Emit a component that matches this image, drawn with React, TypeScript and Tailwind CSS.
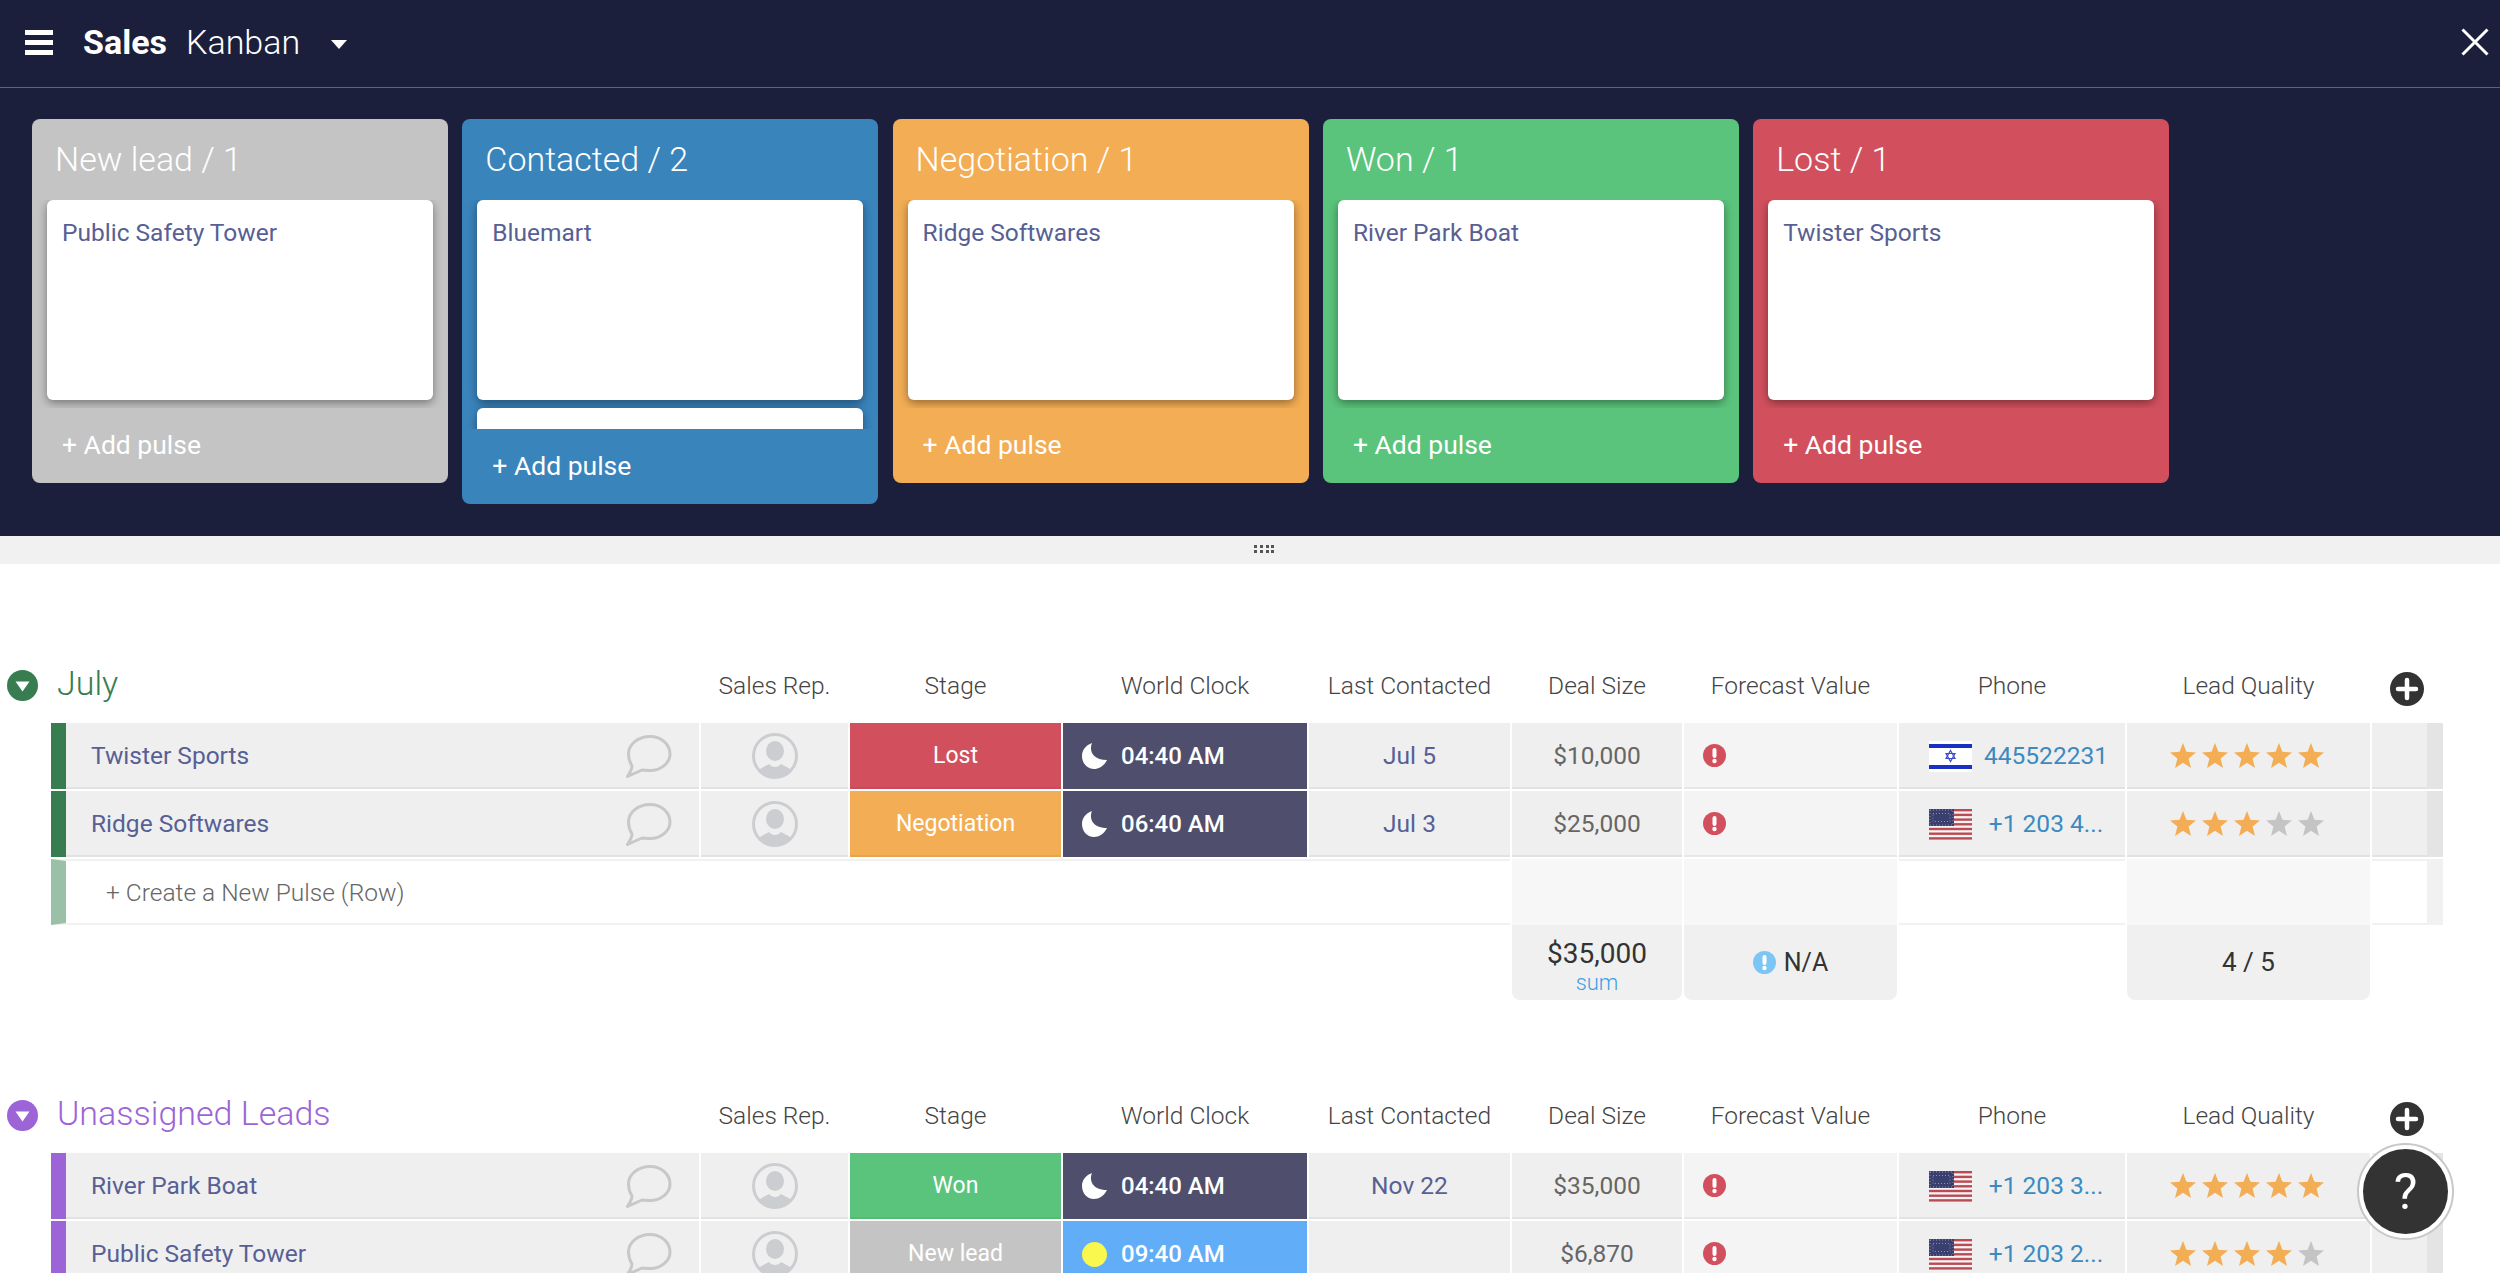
const gridCols = "grid grid-cols-[648px_147px_211px_244px_201px_170px_213px_226px_243px_71px] gap-x-[2px] ml-[51px]"
const cellBase = "shadow-[inset_0_-2px_0_rgba(0,0,0,0.05)] flex items-center"
const rowCell = `bg-[#efefef] justify-center ${cellBase}`

const lanes = [
  { title: "New lead / 1", bg: "bg-[#c4c4c4]", cards: ["Public Safety Tower"] },
  { title: "Contacted / 2", bg: "bg-[#3a84bc]", cards: ["Bluemart", ""] },
  { title: "Negotiation / 1", bg: "bg-[#f3ad54]", cards: ["Ridge Softwares"] },
  { title: "Won / 1", bg: "bg-[#5bc47c]", cards: ["River Park Boat"] },
  { title: "Lost / 1", bg: "bg-[#d2505e]", cards: ["Twister Sports"] },
]

const columnNames = ["Sales Rep.", "Stage", "World Clock", "Last Contacted", "Deal Size", "Forecast Value", "Phone", "Lead Quality"]

type Row = {
  name: string
  stage: string
  stageBg: string
  time: string
  day?: boolean
  contacted: string
  deal: string
  flag: "il" | "us"
  phone: string
  stars: number
}

const julyRows: Row[] = [
  { name: "Twister Sports", stage: "Lost", stageBg: "bg-[#d2505e]", time: "04:40 AM", contacted: "Jul 5", deal: "$10,000", flag: "il", phone: "445522231", stars: 5 },
  { name: "Ridge Softwares", stage: "Negotiation", stageBg: "bg-[#f3ad54]", time: "06:40 AM", contacted: "Jul 3", deal: "$25,000", flag: "us", phone: "+1 203 4...", stars: 3 },
]

const unassignedRows: Row[] = [
  { name: "River Park Boat", stage: "Won", stageBg: "bg-[#5bc47c]", time: "04:40 AM", contacted: "Nov 22", deal: "$35,000", flag: "us", phone: "+1 203 3...", stars: 5 },
  { name: "Public Safety Tower", stage: "New lead", stageBg: "bg-[#c4c4c4]", time: "09:40 AM", day: true, contacted: "", deal: "$6,870", flag: "us", phone: "+1 203 2...", stars: 4 },
]

function CommentIcon() {
  return (
    <svg width="46" height="43" viewBox="0 0 46 43" fill="none" className="text-[#c8c8c8]">
      <path
        d="M6 31C3.500 27 2.500 23 2.500 19C2.500 9.500 12 1.500 24 1.500C36 1.500 44 10 44 19C44 28 35 35.500 24 35.500C21 35.500 18 35 16 35L1.500 41.500C3.500 38 6 35 6 31Z"
        stroke="currentColor"
        strokeWidth="3"
        strokeLinejoin="round"
      />
    </svg>
  )
}

function AvatarIcon() {
  return (
    <svg width="46" height="46" viewBox="0 0 46 46">
      <circle cx="23" cy="23" r="21.500" fill="#efefef" stroke="#cbcdd0" strokeWidth="3" />
      <ellipse cx="23" cy="18" rx="9" ry="10" fill="#cbcdd0" />
      <path d="M7 37C10 34 14 33 17 31C20 35 26 35 29 31C32 33 36 34 39 37C35 41.500 29 44 23 44C17 44 11 41.500 7 37Z" fill="#cbcdd0" />
    </svg>
  )
}

function MoonIcon() {
  return (
    <svg width="25" height="26" viewBox="0 0 25 26">
      <path d="M10 0C7 7 10 17 25 17C22 23 17 26 12 26C5 26 0 20 0 13C0 7 4 2 10 0Z" fill="white" />
    </svg>
  )
}

function AlertDot({ color }: { color: string }) {
  return (
    <svg width="23" height="23" viewBox="0 0 23 23">
      <circle cx="11.500" cy="11.500" r="11.500" fill={color} />
      <rect x="9.500" y="4" width="4" height="10" rx="2" fill="white" />
      <circle cx="11.500" cy="17" r="2.200" fill="white" />
    </svg>
  )
}

function IsraelFlag() {
  return (
    <svg width="43" height="31" viewBox="0 0 43 31" className="shrink-0">
      <rect width="43" height="31" fill="white" />
      <rect y="3" width="43" height="4" fill="#1a2fc4" />
      <rect y="24" width="43" height="4" fill="#1a2fc4" />
      <path d="M21.500 9.500L26 17.500H17ZM21.500 20.500L17 12.500H26Z" fill="none" stroke="#3c4bd0" strokeWidth="1.200" />
    </svg>
  )
}

function UsFlag() {
  const stripes = [0, 1, 2, 3, 4, 5, 6]
  return (
    <svg width="43" height="31" viewBox="0 0 43 31" className="shrink-0">
      <rect width="43" height="31" fill="#f4f4f4" />
      {stripes.map((i) => (
        <rect key={i} y={i * 4.700} width="43" height="2.400" fill="#bb4a54" />
      ))}
      <rect width="25" height="17" fill="#39406f" />
      <rect x="1" y="1" width="23" height="15" fill="none" stroke="#8d91ae" strokeWidth="1" strokeDasharray="1 2" />
      <rect x="4" y="4.500" width="17" height="8" fill="none" stroke="#8d91ae" strokeWidth="1" strokeDasharray="1 2" />
    </svg>
  )
}

function Star({ on }: { on: boolean }) {
  return (
    <svg width="26" height="25" viewBox="0 0 26 25">
      <path d="M13 0L16.400 8.800L26 9.500L18.600 15.500L21 25L13 19.800L5 25L7.400 15.500L0 9.500L9.600 8.800Z" fill={on ? "#f3ad54" : "#c4c4c4"} />
    </svg>
  )
}

function PlusCircle() {
  return (
    <svg width="34" height="34" viewBox="0 0 34 34">
      <circle cx="17" cy="17" r="17" fill="#333333" />
      <path d="M17 8V26M8 17H26" stroke="white" strokeWidth="4.500" strokeLinecap="round" />
    </svg>
  )
}

function GroupToggle({ color }: { color: string }) {
  return (
    <svg width="31" height="31" viewBox="0 0 31 31" className="shrink-0">
      <circle cx="15.500" cy="15.500" r="15.500" fill={color} />
      <path d="M8.500 11.500H22.500L15.500 21.500Z" fill="white" />
    </svg>
  )
}

function GroupHeader({ title, color, textClass }: { title: string; color: string; textClass: string }) {
  return (
    <div className="flex h-[63px]">
      <div className="w-[699px] shrink-0 flex items-start pl-[7px] pt-[10px]">
        <GroupToggle color={color} />
        <span className={`ml-[19px] text-[34px] leading-[27px] font-light ${textClass}`}>{title}</span>
      </div>
      <div className="flex-1 grid grid-cols-[147px_211px_244px_201px_170px_213px_226px_243px_71px] gap-x-[2px] ml-[2px]">
        {columnNames.map((name) => (
          <div key={name} className="text-center text-[24.500px] leading-[51px] font-light text-[#444]">
            {name}
          </div>
        ))}
        <div className="flex pt-[12px] pl-[18px]">
          <PlusCircle />
        </div>
      </div>
    </div>
  )
}

function PulseRow({ row, barClass }: { row: Row; barClass: string }) {
  return (
    <div className={`${gridCols} h-[66px] mb-[2px]`}>
      <div className={`bg-[#efefef] justify-between ${cellBase} border-l-[15px] ${barClass} pl-[25px] pr-[27px]`}>
        <span className="text-[24.500px] text-[#585f94]">{row.name}</span>
        <CommentIcon />
      </div>
      <div className={rowCell}>
        <AvatarIcon />
      </div>
      <div className={`${row.stageBg} justify-center ${cellBase} text-[23px] text-white`}>{row.stage}</div>
      <div className={`flex items-center pl-[19px] gap-[14px] text-[24px] font-medium text-white ${row.day ? "bg-[#62adf7]" : "bg-[#4f4f6d]"}`}>
        {row.day ? <span className="w-[25px] h-[25px] rounded-full bg-[#f8f84f]" /> : <MoonIcon />}
        {row.time}
      </div>
      <div className={`${rowCell} text-[24.500px] text-[#585f94]`}>{row.contacted}</div>
      <div className={`${rowCell} text-[24.500px] text-[#666]`}>{row.deal}</div>
      <div className={`bg-[#f4f4f4] ${cellBase} pl-[19px] pb-[2px]`}>
        <AlertDot color="#d2505e" />
      </div>
      <div className={`bg-[#efefef] ${cellBase} pl-[30px] pr-[5px]`}>
        {row.flag === "il" ? <IsraelFlag /> : <UsFlag />}
        <span className="flex-1 text-center text-[24.500px] text-[#3c8ac0]">{row.phone}</span>
      </div>
      <div className={`${rowCell} gap-[6px] pr-[3px] pb-[2px]`}>
        {[1, 2, 3, 4, 5].map((n) => (
          <Star key={n} on={n <= row.stars} />
        ))}
      </div>
      <div className={`bg-[#efefef] justify-end ${cellBase}`}>
        <div className="w-[16px] h-full bg-[#e4e4e4]" />
      </div>
    </div>
  )
}

export default function App() {
  return (
    <div className="relative w-[2500px] h-[1273px] overflow-hidden bg-white font-['Roboto',sans-serif]">
      <div className="bg-[#1c1f3b] h-[536px]">
        <div className="flex items-center h-[88px] border-b border-[#5f617f] pl-[25px] pr-[11px] pb-[3px] text-white">
          <div className="flex flex-col gap-[5px] w-[28px]">
            <span className="h-[5px] bg-white" />
            <span className="h-[5px] bg-white" />
            <span className="h-[5px] bg-white" />
          </div>
          <span className="ml-[30px] text-[34px] font-bold">Sales</span>
          <span className="ml-[19px] text-[34px] font-light">Kanban</span>
          <span className="ml-[31px] mt-[4px] border-x-[8px] border-x-transparent border-t-[9px] border-t-white" />
          <svg width="28" height="28" viewBox="0 0 28 28" className="ml-auto">
            <path d="M1.500 1.500L26.500 26.500M26.500 1.500L1.500 26.500" stroke="white" strokeWidth="3" />
          </svg>
        </div>

        <div className="flex items-start gap-[14.300px] pl-[32px] pt-[31px]">
          {lanes.map((lane) => (
            <div key={lane.title} className={`w-[416px] rounded-lg ${lane.bg}`}>
              <div className="h-[81px] pl-[23px] pt-[19px] text-[34px] leading-[42px] font-light text-white">{lane.title}</div>
              <div className={`overflow-hidden px-[15px] flex flex-col gap-[8px] ${lane.cards.length > 1 ? "h-[229px]" : "h-[208px]"}`}>
                {lane.cards.map((card, i) => (
                  <div
                    key={i}
                    className="shrink-0 h-[200px] rounded-md bg-white px-[15px] pt-[16px] text-[24.500px] leading-[34px] text-[#585f94] shadow-[0_3px_10px_rgba(0,0,0,0.4)]"
                  >
                    {card}
                  </div>
                ))}
              </div>
              <div className="h-[75px] flex items-center pl-[30px] pb-[1px] text-[26.500px] text-white">+ Add pulse</div>
            </div>
          ))}
        </div>
      </div>

      <div className="h-[28px] bg-[#f1f1f1] flex items-center justify-center pl-[28px] pb-[2px]">
        <div className="grid grid-cols-4 gap-[2px] w-[22px] pl-[1px]">
          {[0, 1, 2, 3, 4, 5, 6, 7].map((i) => (
            <span key={i} className="w-[3px] h-[3px] bg-[#555]" />
          ))}
        </div>
      </div>

      <div className="pt-[96px]">
        <GroupHeader title="July" color="#377d50" textClass="text-[#377d50]" />
        {julyRows.map((row) => (
          <PulseRow key={row.name} row={row} barClass="border-l-[#377d50]" />
        ))}
        <div className={`${gridCols} h-[66px]`}>
          <div className="col-span-5 border-l-[15px] border-l-[#9bc0a8] border-y-2 border-y-[#f1f1f1] flex items-center pl-[40px] pt-[2px] text-[24.500px] font-light text-[#666]">
            + Create a New Pulse (Row)
          </div>
          <div className="bg-[#f7f7f7]" />
          <div className="bg-[#f7f7f7]" />
          <div className="border-y-2 border-y-[#f1f1f1]" />
          <div className="bg-[#f7f7f7]" />
          <div className="border-y-2 border-y-[#f1f1f1] border-r-[16px] border-r-[#f1f1f1]" />
        </div>
        <div className={`${gridCols} h-[75px]`}>
          <div className="col-start-6 bg-[#f0f0f0] rounded-b-lg flex flex-col items-center pt-[12px]">
            <span className="text-[28px] leading-[34px] text-[#333]">$35,000</span>
            <span className="text-[22px] leading-[24px] font-light text-[#3f9ee0]">sum</span>
          </div>
          <div className="col-start-7 bg-[#f0f0f0] rounded-b-lg flex items-center justify-center gap-[8px] text-[25px] text-[#333]">
            <AlertDot color="#7cc6f5" />
            N/A
          </div>
          <div className="col-start-9 bg-[#f0f0f0] rounded-b-lg flex items-center justify-center text-[26px] text-[#333]">
            4 / 5
          </div>
        </div>

        <div className="pt-[90px]">
          <GroupHeader title="Unassigned Leads" color="#9c64d6" textClass="text-[#9c64d6]" />
          {unassignedRows.map((row) => (
            <PulseRow key={row.name} row={row} barClass="border-l-[#9c64d6]" />
          ))}
        </div>
      </div>

      <button className="absolute left-[2359px] top-[1145px] w-[93px] h-[93px] rounded-full bg-[#333] border-[4px] border-white outline-[2px] outline-[#c8c8c8] text-white text-[50px] leading-none">
        ?
      </button>
    </div>
  )
}
